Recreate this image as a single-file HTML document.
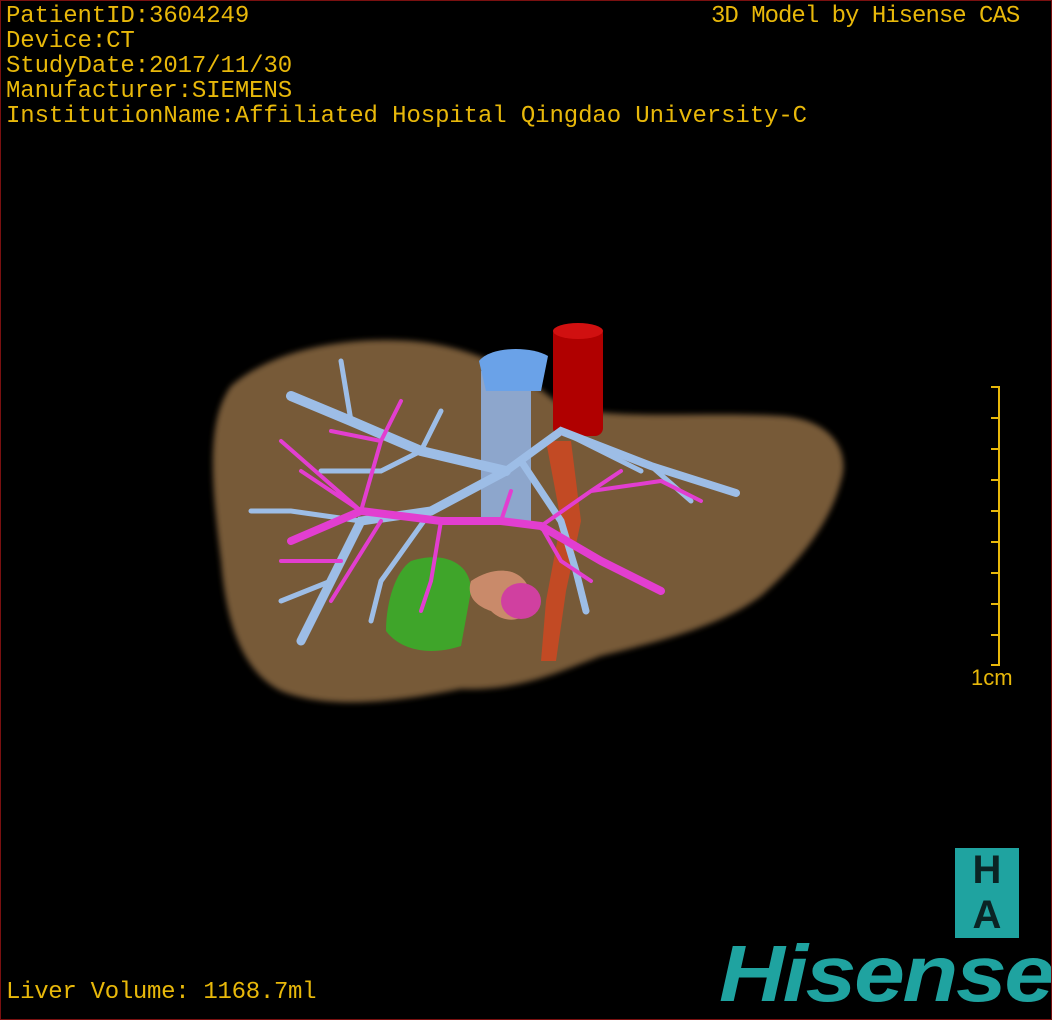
<!DOCTYPE html>
<html><head><meta charset="utf-8"><style>
html,body{margin:0;padding:0;background:#000}
#w{position:relative;width:1050px;height:1018px;border:1px solid #7a1010;background:#000;overflow:hidden;font-family:"Liberation Mono",monospace;color:#e8b80a}
.t{position:absolute;font-size:24px;line-height:25px;white-space:pre}
</style></head><body><div id="w">
<svg width="1050" height="1018" style="position:absolute;left:0;top:0">
<defs><filter id="b"><feGaussianBlur stdDeviation="3"/></filter></defs>
<path d="M230 385 C270 350 340 335 410 340 C470 345 520 370 560 405 C620 420 700 410 780 415 C830 418 850 450 840 480 C830 520 800 560 760 595 C720 625 660 640 600 655 C560 670 520 690 460 688 C400 700 330 710 280 690 C240 670 225 620 220 560 C210 480 205 420 230 385Z" fill="#775a37" filter="url(#b)"/>
<rect x="552" y="325" width="50" height="110" rx="8" fill="#b00000"/>
<ellipse cx="577" cy="330" rx="25" ry="8" fill="#d01010"/>
<path d="M545 440 L560 520 L545 600 L540 660 L555 660 L565 590 L580 520 L570 440Z" fill="#c24a24"/>
<path d="M410 560 C440 550 470 560 470 590 L460 645 C430 655 400 650 385 630 C385 600 395 570 410 560Z" fill="#3fa52a"/>
<path d="M470 580 C500 560 530 570 530 600 C530 620 505 625 490 610 C475 605 465 595 470 580Z" fill="#c98a6a"/>
<ellipse cx="520" cy="600" rx="20" ry="18" fill="#d040a0"/>
<rect x="480" y="370" width="50" height="150" fill="#8da6cc"/>
<path d="M478 360 C490 345 530 345 547 355 L540 390 L485 390Z" fill="#6aa2e8"/>
<g fill="none" stroke="#9dbde6" stroke-linecap="round">
<path d="M505 470 L420 450 L350 420 L290 395" stroke-width="10"/>
<path d="M505 470 L430 510 L360 520 L330 580 L300 640" stroke-width="9"/>
<path d="M505 470 L560 430 L650 465 L735 492" stroke-width="8"/>
<path d="M520 460 L560 520 L575 570 L585 610" stroke-width="7"/>
<path d="M420 450 L440 410 M350 420 L340 360 M360 520 L290 510 L250 510 M430 510 L380 580 L370 620 M330 580 L280 600 M560 430 L640 470 M650 465 L690 500 M420 450 L380 470 L320 470" stroke-width="5"/>
</g>
<g fill="none" stroke="#e23ed0" stroke-linecap="round">
<path d="M290 540 L360 510 L440 520 L500 520 L540 525 L600 560 L660 590" stroke-width="8"/>
<path d="M360 510 L380 440 L400 400 M500 520 L510 490 M540 525 L590 490 L660 480 L700 500 M360 510 L300 470 M440 520 L430 580 L420 610 M380 520 L330 600 M540 525 L560 560 L590 580 M360 510 L280 440 M380 440 L330 430 M590 490 L620 470 M340 560 L280 560" stroke-width="4"/>
</g>
<g stroke="#e8b80a" stroke-width="2">
<line x1="998" y1="385" x2="998" y2="665"/>
<line x1="990" y1="386" x2="998" y2="386"/><line x1="990" y1="417" x2="998" y2="417"/><line x1="990" y1="448" x2="998" y2="448"/><line x1="990" y1="479" x2="998" y2="479"/><line x1="990" y1="510" x2="998" y2="510"/><line x1="990" y1="541" x2="998" y2="541"/><line x1="990" y1="572" x2="998" y2="572"/><line x1="990" y1="603" x2="998" y2="603"/><line x1="990" y1="634" x2="998" y2="634"/><line x1="990" y1="664" x2="998" y2="664"/>
</g>
</svg>
<div class="t" style="left:5px;top:3px;letter-spacing:-0.1px">PatientID:3604249
Device:CT
StudyDate:2017/11/30
Manufacturer:SIEMENS
InstitutionName:Affiliated Hospital Qingdao University-C</div>
<div class="t" style="left:710px;top:3px;letter-spacing:-1px">3D Model by Hisense CAS</div>
<div class="t" style="left:970px;top:664px;font-family:'Liberation Sans',sans-serif;font-size:22px">1cm</div>
<div class="t" style="left:5px;top:979px;letter-spacing:-0.3px">Liver Volume: 1168.7ml</div>
<div style="position:absolute;left:954px;top:847px;width:64px;height:90px;background:#1fa3a0;color:#0b2424;font-family:'Liberation Sans',sans-serif;font-weight:bold;font-size:40px;text-align:center;line-height:45px">H<br>A</div>
<div style="position:absolute;left:718px;top:928px;font-family:'Liberation Sans',sans-serif;font-weight:bold;font-style:italic;font-size:80px;color:#1fa3a0;letter-spacing:-2px;line-height:90px;transform:scaleX(1.14);transform-origin:0 0">Hisense</div>
</div></body></html>
